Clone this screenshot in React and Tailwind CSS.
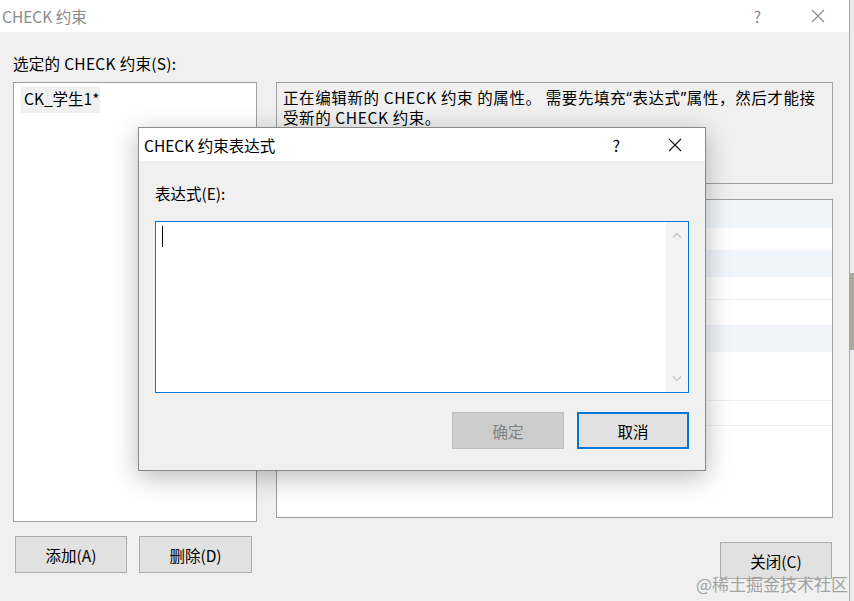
import React from 'react'

const font = "font-['Noto_Sans_CJK_SC','Noto_Sans',sans-serif]"

function CloseGlyph({ className }) {
  return (
    <svg viewBox="0 0 14 14" className={className} fill="none" stroke="currentColor" strokeWidth="1.1">
      <path d="M1 1L13 13M13 1L1 13" />
    </svg>
  )
}

function WinButton({ children, className = '' }) {
  return (
    <div
      className={`flex items-center justify-center bg-[#e1e1e1] border border-[#adadad] text-[15.5px] leading-5 text-black ${className}`}
    >
      {children}
    </div>
  )
}

const gridRows = [
  { h: 'h-[28px]', blue: true },
  { h: 'h-[22px]' },
  { h: 'h-[27px]', blue: true },
  { h: 'h-[23px]', line: true },
  { h: 'h-[26px]', line: true },
  { h: 'h-[26px]', blue: true },
  { h: 'h-[25px]' },
  { h: 'h-[24px]', line: true },
  { h: 'h-[25px]', line: true },
]

// narrow quote marks, the CJK font would draw them full width
const q = "font-['Noto_Sans',sans-serif]"

function ExpressionDialog() {
  return (
    <div className="absolute left-[138px] top-[127px] w-[568px] h-[344px] flex flex-col border border-[#8a8a8a] bg-[#f0f0f0] shadow-[0_6px_24px_rgba(0,0,0,0.28)]">
      <div className="h-[33px] bg-white flex items-center pl-[5px] text-[15.5px] leading-5 text-black">
        <span>CHECK 约束表达式</span>
        <span className="ml-auto mr-[48px] text-[16px]">?</span>
        <CloseGlyph className="w-[14px] h-[14px] mr-[23px] text-[#111]" />
      </div>
      <div className="flex-1 flex flex-col pl-[16px] pr-[16px]">
        <div className="mt-[22px] text-[15.5px] leading-5 text-black">表达式(E):</div>
        <div className="mt-[18px] h-[172px] border border-[#0078d7] bg-white flex">
          <div className="flex-1 pl-[6px] pt-[4px]">
            <div className="w-px h-[21px] bg-black" />
          </div>
          <div className="w-[22px] bg-[#f3f3f3] flex flex-col items-center justify-between py-[10px]">
            <svg viewBox="0 0 10 6" className="w-[10px] h-[6px] text-[#c2c2c2]" fill="none" stroke="currentColor" strokeWidth="1.2">
              <path d="M1 5.5L5 1.5L9 5.5" />
            </svg>
            <svg viewBox="0 0 10 6" className="w-[10px] h-[6px] text-[#c2c2c2]" fill="none" stroke="currentColor" strokeWidth="1.2">
              <path d="M1 0.5L5 4.5L9 0.5" />
            </svg>
          </div>
        </div>
        <div className="mt-[19px] flex justify-end gap-[13px]">
          <div className="w-[112px] h-[37px] flex items-center justify-center bg-[#cccccc] border border-[#bfbfbf] text-[15.5px] leading-5 text-[#838383]">
            确定
          </div>
          <div className="w-[112px] h-[37px] flex items-center justify-center bg-[#e1e1e1] border-2 border-[#0078d7] text-[15.5px] leading-5 text-black">
            取消
          </div>
        </div>
      </div>
    </div>
  )
}

export default function App() {
  return (
    <div className={`relative w-[854px] h-[601px] overflow-hidden bg-[#ebebeb] flex ${font}`}>
      <div className="w-[850px] h-full flex flex-col border-r border-[#a8a8a8]">
        <div className="h-[32px] bg-white flex items-center pl-[2px] text-[15.5px] leading-5 text-[#8a8a8a]">
          <span>CHECK 约束</span>
          <span className="ml-auto mr-[50px] text-[16px] text-[#8a8a8a]">?</span>
          <CloseGlyph className="w-[14px] h-[14px] mr-[24px] text-[#8a8a8a]" />
        </div>
        <div className="flex-1 bg-[#f0f0f0] flex flex-col pl-[13px] pt-[21px]">
          <div className="text-[15.5px] leading-5 text-black tracking-[0.3px]">选定的 CHECK 约束(S):</div>
          <div className="mt-[9px] flex gap-[19px]">
            <div className="w-[244px] flex flex-col">
              <div className="h-[440px] bg-white border border-[#9f9f9f] pl-[7px] pt-[4px]">
                <div className="w-[79px] h-[26px] bg-[#f0f0f0] flex items-center pl-[3px] pb-[3px] text-[15.5px] text-black whitespace-nowrap">
                  CK_学生1*
                </div>
              </div>
              <div className="mt-[14px] ml-[2px] flex gap-[12px]">
                <WinButton className="w-[112px] h-[37px]">添加(A)</WinButton>
                <WinButton className="w-[113px] h-[37px]">删除(D)</WinButton>
              </div>
            </div>
            <div className="w-[557px] flex flex-col">
              <div className="h-[102px] border border-[#9f9f9f] bg-[#f0f0f0] pl-[6px] pt-[5px] text-[15.5px] leading-[19px] text-black whitespace-nowrap tracking-[0.6px]">
                <div>
                  正在编辑新的 CHECK 约束 的属性。 需要先填充<span className={q}>“</span>表达式<span className={q}>”</span>属性，然后才能接
                </div>
                <div>受新的 CHECK 约束。</div>
              </div>
              <div className="mt-[15px] h-[319px] border border-[#9f9f9f] bg-white flex flex-col">
                {gridRows.map((r, i) => (
                  <div
                    key={i}
                    className={`${r.h} ${r.blue ? 'bg-[#f0f4fb]' : 'bg-white'} ${r.line ? 'border-b border-[#f0f0f0]' : ''}`}
                  />
                ))}
              </div>
              <div className="mt-[24px] flex justify-end pr-px">
                <WinButton className="w-[112px] h-[37px]">关闭(C)</WinButton>
              </div>
            </div>
          </div>
        </div>
      </div>
      <div className="flex-1 flex flex-col">
        <div className="h-[273px]" />
        <div className="h-[77px] bg-[#a9aa9c]" />
      </div>
      <ExpressionDialog />
      <div className="absolute right-[6px] bottom-[5px] text-[17px] leading-6 text-[#a3a3a3]">
        @稀土掘金技术社区
      </div>
    </div>
  )
}
